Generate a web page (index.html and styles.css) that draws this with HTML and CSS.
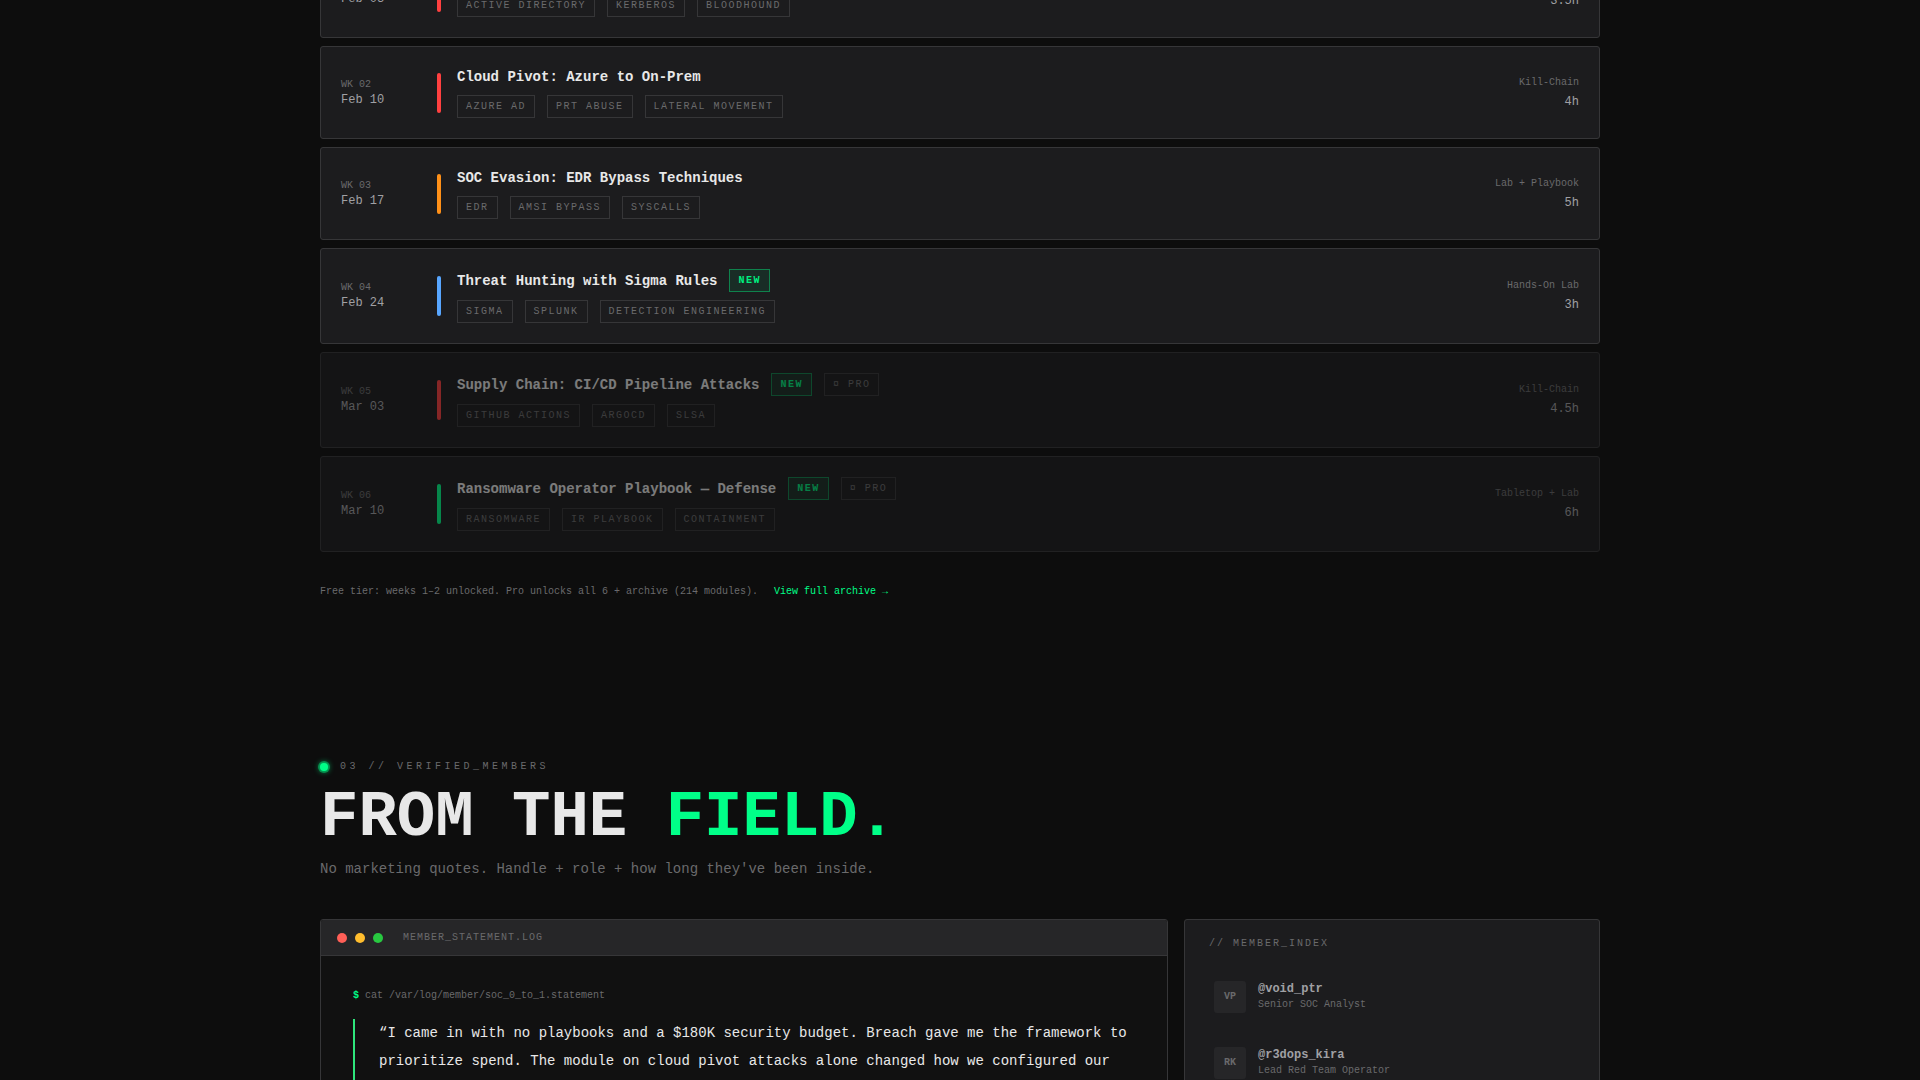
FILE: index.html
```
<!DOCTYPE html>
<html lang="en">
<head>
<meta charset="utf-8">
<title>Breach</title>
<link rel="stylesheet" href="styles.css">
</head>
<body>
<main class="page">
  <section class="modules">
    <ol class="module-list">
      <li class="module">
        <div class="when"><span class="week">WK 01</span><span class="date">Feb 03</span></div>
        <span class="bar red"></span>
        <div class="info">
          <div class="title-row"><h3>Kerberos Abuse: AD Attack Paths</h3></div>
          <div class="tags"><span class="tag">ACTIVE DIRECTORY</span><span class="tag">KERBEROS</span><span class="tag">BLOODHOUND</span></div>
        </div>
        <div class="meta"><span class="kind">Hands-On Lab</span><span class="hours">3.5h</span></div>
      </li>
      <li class="module">
        <div class="when"><span class="week">WK 02</span><span class="date">Feb 10</span></div>
        <span class="bar red"></span>
        <div class="info">
          <div class="title-row"><h3>Cloud Pivot: Azure to On-Prem</h3></div>
          <div class="tags"><span class="tag">AZURE AD</span><span class="tag">PRT ABUSE</span><span class="tag">LATERAL MOVEMENT</span></div>
        </div>
        <div class="meta"><span class="kind">Kill-Chain</span><span class="hours">4h</span></div>
      </li>
      <li class="module">
        <div class="when"><span class="week">WK 03</span><span class="date">Feb 17</span></div>
        <span class="bar orange"></span>
        <div class="info">
          <div class="title-row"><h3>SOC Evasion: EDR Bypass Techniques</h3></div>
          <div class="tags"><span class="tag">EDR</span><span class="tag">AMSI BYPASS</span><span class="tag">SYSCALLS</span></div>
        </div>
        <div class="meta"><span class="kind">Lab + Playbook</span><span class="hours">5h</span></div>
      </li>
      <li class="module">
        <div class="when"><span class="week">WK 04</span><span class="date">Feb 24</span></div>
        <span class="bar blue"></span>
        <div class="info">
          <div class="title-row"><h3>Threat Hunting with Sigma Rules</h3><span class="tag new">NEW</span></div>
          <div class="tags"><span class="tag">SIGMA</span><span class="tag">SPLUNK</span><span class="tag">DETECTION ENGINEERING</span></div>
        </div>
        <div class="meta"><span class="kind">Hands-On Lab</span><span class="hours">3h</span></div>
      </li>
      <li class="module locked">
        <div class="when"><span class="week">WK 05</span><span class="date">Mar 03</span></div>
        <span class="bar red"></span>
        <div class="info">
          <div class="title-row"><h3>Supply Chain: CI/CD Pipeline Attacks</h3><span class="tag new">NEW</span><span class="tag">¤ PRO</span></div>
          <div class="tags"><span class="tag">GITHUB ACTIONS</span><span class="tag">ARGOCD</span><span class="tag">SLSA</span></div>
        </div>
        <div class="meta"><span class="kind">Kill-Chain</span><span class="hours">4.5h</span></div>
      </li>
      <li class="module locked">
        <div class="when"><span class="week">WK 06</span><span class="date">Mar 10</span></div>
        <span class="bar green"></span>
        <div class="info">
          <div class="title-row"><h3>Ransomware Operator Playbook — Defense</h3><span class="tag new">NEW</span><span class="tag">¤ PRO</span></div>
          <div class="tags"><span class="tag">RANSOMWARE</span><span class="tag">IR PLAYBOOK</span><span class="tag">CONTAINMENT</span></div>
        </div>
        <div class="meta"><span class="kind">Tabletop + Lab</span><span class="hours">6h</span></div>
      </li>
    </ol>
    <p class="tier">Free tier: weeks 1–2 unlocked. Pro unlocks all 6 + archive (214 modules). <a href="#archive">View full archive →</a></p>
  </section>

  <section class="members">
    <p class="eyebrow"><span class="pulse"></span>03 // VERIFIED_MEMBERS</p>
    <h2>FROM THE <em>FIELD.</em></h2>
    <p class="lead">No marketing quotes. Handle + role + how long they've been inside.</p>
    <div class="columns">
      <article class="terminal">
        <header class="terminal-head">
          <span class="dot close"></span><span class="dot minimize"></span><span class="dot expand"></span>
          <span class="file">MEMBER_STATEMENT.LOG</span>
        </header>
        <div class="terminal-body">
          <p class="command"><b>$</b> cat /var/log/member/soc_0_to_1.statement</p>
          <blockquote>“I came in with no playbooks and a $180K security budget. Breach gave me the framework to prioritize spend. The module on cloud pivot attacks alone changed how we configured our</blockquote>
        </div>
      </article>
      <aside class="index">
        <h3 class="index-title">// MEMBER_INDEX</h3>
        <div class="member-list">
          <button class="member" type="button"><span class="avatar">VP</span><span class="who"><span class="handle">@void_ptr</span><span class="role">Senior SOC Analyst</span></span></button>
          <button class="member" type="button"><span class="avatar">RK</span><span class="who"><span class="handle">@r3dops_kira</span><span class="role">Lead Red Team Operator</span></span></button>
        </div>
      </aside>
    </div>
  </section>
</main>
</body>
</html>
```
FILE: styles.css
```
:root {
  --bg: #0d0d0d;
  --card: #1c1c1e;
  --raised: #262628;
  --line: #363638;
  --text: #e8e8e8;
  --soft: #a0a0a4;
  --muted: #6a6a6c;
  --green: #00ff88;
}

* { box-sizing: border-box; }

body {
  margin: 0;
  height: 100vh;
  overflow: hidden;
  background: var(--bg);
  color: var(--text);
  font-family: "Liberation Mono", "Courier New", monospace;
  font-size: 14px;
}

h2, h3, p, ol, blockquote { margin: 0; padding: 0; }

.page {
  max-width: 1280px;
  margin: 0 auto;
}

/* The list is scrolled past its first entry */
.module-list {
  display: flex;
  flex-direction: column;
  gap: 8px;
  margin-top: -55px;
  list-style: none;
}

.module {
  display: flex;
  align-items: center;
  gap: 16px;
  padding: 20px;
  background: var(--card);
  border: 1px solid var(--line);
  border-radius: 3px;
}

.locked { opacity: 0.5; }

.when {
  display: flex;
  flex-direction: column;
  width: 80px;
}

.week, .kind {
  color: var(--muted);
  font-size: 10px;
  line-height: 14px;
}

.date, .hours {
  color: var(--soft);
  font-size: 12px;
  line-height: 16px;
}

.bar {
  width: 4px;
  height: 40px;
  border-radius: 2px;
}

.red { background: #ff4040; }
.orange { background: #ff9018; }
.blue { background: #58a6ff; }
.green { background: var(--green); }

.info {
  display: flex;
  flex: 1;
  flex-direction: column;
  gap: 8px;
}

.title-row, .tags {
  display: flex;
  align-items: center;
  gap: 12px;
}

.title-row h3 {
  font-size: 14px;
  line-height: 20px;
}

.tag {
  padding: 4px 8px;
  border: 1px solid var(--line);
  color: var(--muted);
  font-size: 10px;
  line-height: 13px;
  letter-spacing: 1.5px;
}

.new {
  background: rgba(0, 255, 136, 0.08);
  border-color: rgba(0, 255, 136, 0.4);
  color: #00f080;
  font-weight: 700;
}

.meta {
  display: flex;
  flex-direction: column;
  gap: 4px;
  text-align: right;
}

.tier {
  display: flex;
  gap: 16px;
  margin-top: 32px;
  color: var(--muted);
  font-size: 10px;
  line-height: 16px;
}

.tier a {
  color: var(--green);
  text-decoration: none;
}

.members { padding-top: 159px; }

.eyebrow {
  display: flex;
  align-items: center;
  gap: 12px;
  color: var(--muted);
  font-size: 10px;
  line-height: 16px;
  letter-spacing: 3.5px;
}

.pulse {
  width: 8px;
  height: 8px;
  border-radius: 50%;
  background: var(--green);
  box-shadow: 0 0 0 2px rgba(0, 255, 136, 0.4), 0 0 6px var(--green);
}

h2 {
  margin-top: 11px;
  font-size: 64px;
  line-height: 64px;
}

h2 em {
  color: var(--green);
  font-style: normal;
}

.lead {
  margin-top: 9px;
  color: var(--muted);
  line-height: 20px;
}

.columns {
  display: grid;
  grid-template-columns: 1fr 416px;
  gap: 16px;
  margin-top: 40px;
}

.terminal, .index {
  border: 1px solid var(--line);
  border-radius: 3px;
}

.terminal {
  overflow: hidden;
  background: #111111;
}

.terminal-head {
  display: flex;
  align-items: center;
  gap: 8px;
  padding: 10px 16px;
  background: var(--raised);
  border-bottom: 1px solid var(--line);
}

.dot {
  width: 10px;
  height: 10px;
  border-radius: 50%;
}

.close { background: #ff5f57; }
.minimize { background: #ffbd2e; }
.expand { background: #28c840; }

.file {
  margin-left: 12px;
  color: var(--muted);
  font-size: 10px;
  line-height: 15px;
  letter-spacing: 1px;
}

.terminal-body { padding: 32px; }

.command {
  color: var(--muted);
  font-size: 10px;
  line-height: 15px;
}

.command b { color: var(--green); }

blockquote {
  margin-top: 16px;
  padding: 0 0 28px 24px;
  border-left: 2px solid #2ee67c;
  line-height: 28px;
}

.index {
  padding: 16px 24px;
  background: var(--card);
}

.index-title {
  color: var(--muted);
  font-size: 10px;
  font-weight: 400;
  line-height: 15px;
  letter-spacing: 2px;
}

.member-list {
  display: flex;
  flex-direction: column;
  gap: 8px;
  margin-top: 17px;
}

.member {
  display: flex;
  align-items: center;
  gap: 12px;
  padding: 12px 4px;
  background: none;
  border: 1px solid transparent;
  font-family: inherit;
  text-align: left;
}

.avatar {
  width: 32px;
  border-radius: 3px;
  background: var(--raised);
  color: var(--muted);
  font-size: 10px;
  font-weight: 700;
  line-height: 32px;
  text-align: center;
}

.who {
  display: flex;
  flex-direction: column;
}

.handle {
  color: var(--soft);
  font-size: 12px;
  font-weight: 700;
  line-height: 16px;
}

.role {
  color: var(--muted);
  font-size: 10px;
  line-height: 16px;
}
```
